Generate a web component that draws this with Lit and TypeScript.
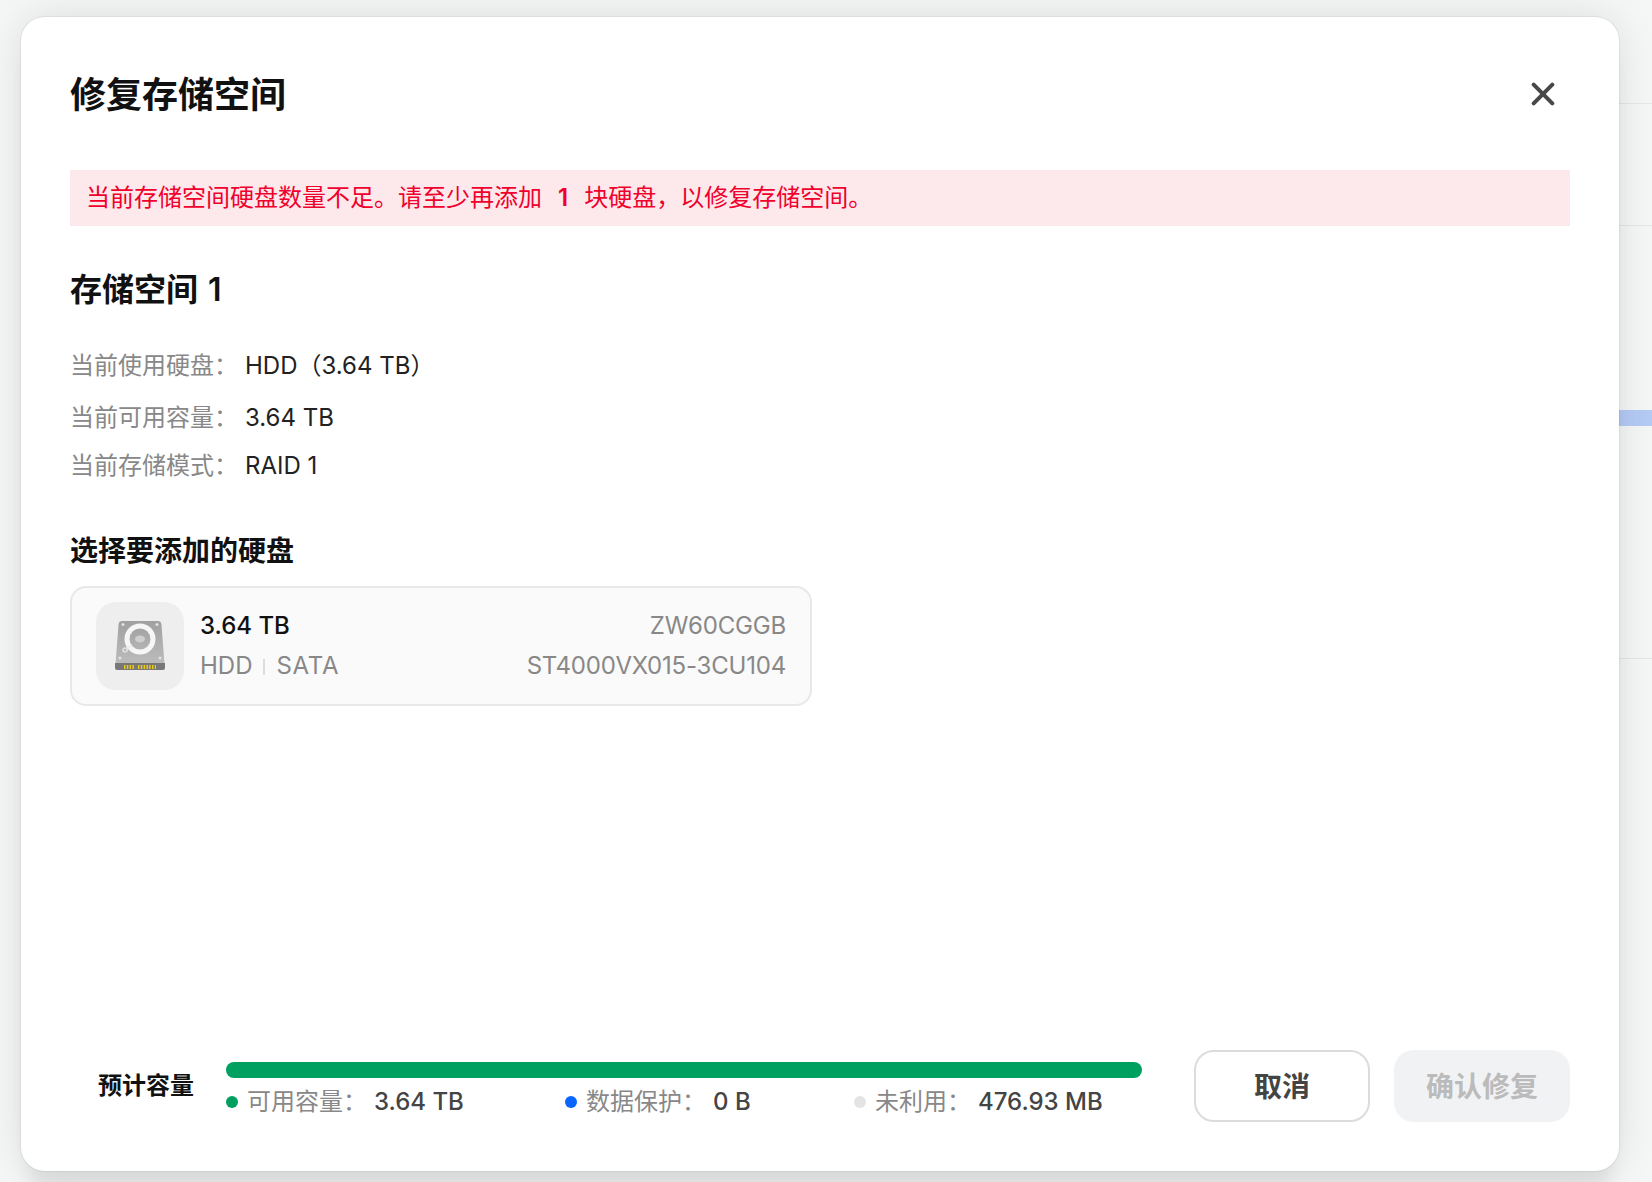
import { LitElement, html, css, svg } from "lit";
import { customElement } from "lit/decorators.js";

const hddIcon = svg`<svg width="88" height="88" viewBox="0 0 88 88" xmlns="http://www.w3.org/2000/svg">
  <defs>
    <linearGradient id="b" x1="0" y1="0" x2="0" y2="1"><stop offset="0" stop-color="#a0a0a0"/><stop offset="1" stop-color="#bcbcbc"/></linearGradient>
    <linearGradient id="p" x1="0" y1="0" x2="0" y2="1"><stop offset="0" stop-color="#a4a4a4"/><stop offset="1" stop-color="#b4b4b4"/></linearGradient>
  </defs>
  <path d="M26 19h36q3 0 3.400 3L68.500 62H19.500L22.600 22q.4-3 3.400-3Z" fill="url(#b)"/>
  <path d="M19 61h50v5q0 2-2 2H21q-2 0-2-2Z" fill="#787878"/>
  <circle cx="44" cy="37" r="15.500" fill="#f6f6f6"/>
  <circle cx="44" cy="37" r="10.500" fill="url(#p)"/>
  <ellipse cx="44" cy="37" rx="5" ry="3.500" fill="#cfcfcf"/>
  <path d="M29 48l7-4.500" stroke="#eeeeee" stroke-width="3"/>
  <circle cx="29" cy="48" r="2.800" fill="#dedede"/>
  <circle cx="29" cy="48" r="1" fill="#aaaaaa"/>
  <g fill="#e2e2e2"><circle cx="27" cy="22.500" r="1.500"/><circle cx="61" cy="22.500" r="1.500"/><circle cx="24" cy="56" r="1.500"/><circle cx="64" cy="56" r="1.500"/></g>
  <path d="M28 65h10M42 65h18" stroke="#eccb14" stroke-width="4" stroke-dasharray="1.500 1.300" fill="none"/>
</svg>`;

@customElement("app-root")
export class AppRoot extends LitElement {
  static styles = css`
    :host {
      display: block;
      width: 1652px;
      height: 1182px;
      overflow: hidden;
      position: relative;
      background: #f5f6f6;
      font-family: Inter, "Noto Sans CJK SC", sans-serif;
      color: #111;
    }
    .bgline { position: absolute; left: 1600px; width: 52px; height: 1px; background: #e6e6e6; }
    .l1 { top: 103px; }
    .l2 { top: 225px; }
    .l3 { top: 658px; }
    .bgblock { position: absolute; left: 1600px; top: 410px; width: 52px; height: 16px; background: #b4cbf6; }
    .modal {
      position: absolute;
      left: 21px;
      top: 17px;
      box-sizing: border-box;
      width: 1598px;
      height: 1154px;
      background: #fff;
      border-radius: 24px;
      padding: 0 49px;
      display: flex;
      flex-direction: column;
      box-shadow: 0 0 0 1px rgba(0,0,0,.05), 0 0 40px rgba(0,0,0,.11), 0 30px 20px -8px rgba(0,0,0,.07);
    }
    .head { height: 153px; display: flex; justify-content: space-between; align-items: flex-start; flex: none; }
    h1 { margin: 57px 0 0; font-size: 36px; line-height: 42px; font-weight: 600; }
    .close { margin: 65px 15px 0 0; width: 24px; height: 24px; display: block; }
    .alert {
      flex: none;
      height: 56px;
      background: #fde8eb;
      color: #f0002c;
      font-size: 24px;
      line-height: 56px;
      padding-left: 16px;
    }
    .alert b { font-weight: 600; margin: 0 16px; }
    h2 { margin: 44px 0 0; font-size: 32px; line-height: 40px; font-weight: 600; word-spacing: 2px; }
    .rows { margin-top: 32px; font-size: 24px; display: flex; flex-direction: column; }
    .row { display: flex; align-items: baseline; line-height: 48px; }
    .row:nth-child(2) { margin-top: 4px; }
    .row .k { width: 175px; color: #888; }
    .row .v { color: #222; }
    h3 { margin: 41px 0 0; font-size: 28px; line-height: 40px; font-weight: 600; }
    .card {
      margin-top: 15px;
      box-sizing: border-box;
      width: 742px;
      height: 120px;
      background: #fafafa;
      border: 2px solid #e8e8e8;
      border-radius: 16px;
      padding: 14px 24px;
      display: flex;
      gap: 16px;
      align-items: center;
    }
    .ico { width: 88px; height: 88px; background: #eee; border-radius: 20px; flex: none; }
    .ico svg { display: block; }
    .info { flex: 1; display: flex; flex-direction: column; gap: 8px; font-size: 24px; line-height: 32px; color: #888; }
    .line { display: flex; justify-content: space-between; }
    .line > span:last-child { letter-spacing: -.2px; }
    .cap { color: #111; font-weight: 500; }
    .sata { letter-spacing: .7px; }
    .sep { display: inline-block; width: 2px; height: 16px; background: #ddd; margin: 0 11px; vertical-align: -1px; }
    .foot { margin-top: auto; margin-bottom: 49px; display: flex; align-items: center; flex: none; height: 72px; }
    .cap-label { width: 156px; box-sizing: border-box; padding: 0 0 6px 28px; font-size: 24px; font-weight: 600; flex: none; }
    .meter { width: 916px; flex: none; margin-top: 8px; }
    .bar { height: 16px; border-radius: 8px; background: #00a060; }
    .legend { display: flex; font-size: 24px; line-height: 32px; margin-top: 8px; }
    .item { display: flex; align-items: center; color: #888; }
    .item:nth-child(1) { width: 339px; }
    .item:nth-child(2) { width: 289px; }
    .dot { width: 12px; height: 12px; border-radius: 50%; margin-right: 9px; flex: none; }
    .item .val { color: #444; margin-left: 7px; font-weight: 500; }
    .btns { margin-left: auto; display: flex; gap: 24px; }
    .btn {
      box-sizing: border-box;
      width: 176px;
      height: 72px;
      border-radius: 20px;
      font: inherit;
      font-size: 28px;
      font-weight: 600;
      padding: 0 0 2px;
    }
    .cancel { background: #fff; border: 2px solid #dcdcdc; color: #444; }
    .ok { background: #f1f2f4; border: 0; color: #bbb; }
  `;

  render() {
    return html`
      <div class="bgline l1"></div><div class="bgline l2"></div><div class="bgline l3"></div>
      <div class="bgblock"></div>
      <div class="modal">
        <div class="head">
          <h1>修复存储空间</h1>
          <svg class="close" viewBox="0 0 24 24"><path d="M2.700 2.700l18.600 18.600M21.300 2.700L2.700 21.300" stroke="#484848" stroke-width="4" stroke-linecap="round" fill="none"/></svg>
        </div>
        <div class="alert">当前存储空间硬盘数量不足。请至少再添加<b>1</b>块硬盘，以修复存储空间。</div>
        <h2>存储空间 1</h2>
        <div class="rows">
          <div class="row"><span class="k">当前使用硬盘：</span><span class="v">HDD（3.64 TB）</span></div>
          <div class="row"><span class="k">当前可用容量：</span><span class="v">3.64 TB</span></div>
          <div class="row"><span class="k">当前存储模式：</span><span class="v">RAID 1</span></div>
        </div>
        <h3>选择要添加的硬盘</h3>
        <div class="card">
          <div class="ico">${hddIcon}</div>
          <div class="info">
            <div class="line"><span class="cap">3.64 TB</span><span>ZW60CGGB</span></div>
            <div class="line"><span>HDD<i class="sep"></i><span class="sata">SATA</span></span><span>ST4000VX015-3CU104</span></div>
          </div>
        </div>
        <div class="foot">
          <div class="cap-label">预计容量</div>
          <div class="meter">
            <div class="bar"></div>
            <div class="legend">
              <div class="item"><i class="dot" style="background:#00a060"></i>可用容量：<span class="val">3.64 TB</span></div>
              <div class="item"><i class="dot" style="background:#0a64ff"></i>数据保护：<span class="val">0 B</span></div>
              <div class="item"><i class="dot" style="background:#e4e4e4"></i>未利用：<span class="val">476.93 MB</span></div>
            </div>
          </div>
          <div class="btns">
            <button class="btn cancel">取消</button>
            <button class="btn ok">确认修复</button>
          </div>
        </div>
      </div>
    `;
  }
}
